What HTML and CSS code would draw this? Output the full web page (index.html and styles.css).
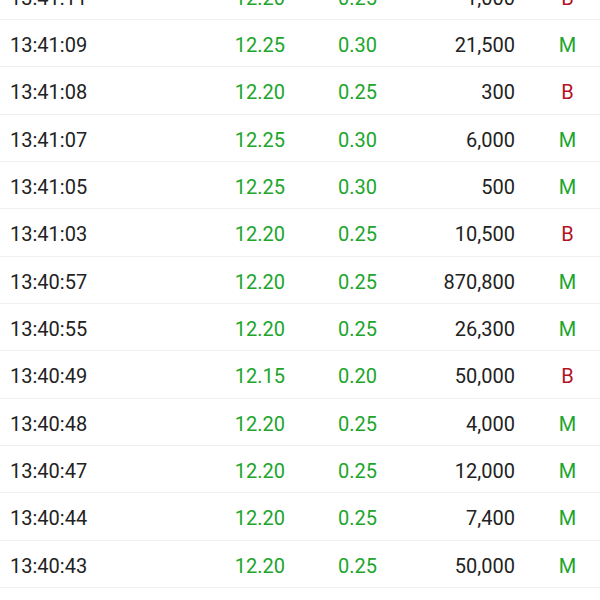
FILE: index.html
```html
<!DOCTYPE html>
<html lang="en">
<head>
<meta charset="utf-8">
<title>Trades</title>
<link rel="stylesheet" href="styles.css">
</head>
<body>
<div class="list">
  <div class="row"><span class="time">13:41:11</span><span class="price up">12.20</span><span class="chg up">0.25</span><span class="vol">1,000</span><span class="side sell">B</span></div>
  <div class="row"><span class="time">13:41:09</span><span class="price up">12.25</span><span class="chg up">0.30</span><span class="vol">21,500</span><span class="side buy">M</span></div>
  <div class="row"><span class="time">13:41:08</span><span class="price up">12.20</span><span class="chg up">0.25</span><span class="vol">300</span><span class="side sell">B</span></div>
  <div class="row"><span class="time">13:41:07</span><span class="price up">12.25</span><span class="chg up">0.30</span><span class="vol">6,000</span><span class="side buy">M</span></div>
  <div class="row"><span class="time">13:41:05</span><span class="price up">12.25</span><span class="chg up">0.30</span><span class="vol">500</span><span class="side buy">M</span></div>
  <div class="row"><span class="time">13:41:03</span><span class="price up">12.20</span><span class="chg up">0.25</span><span class="vol">10,500</span><span class="side sell">B</span></div>
  <div class="row"><span class="time">13:40:57</span><span class="price up">12.20</span><span class="chg up">0.25</span><span class="vol">870,800</span><span class="side buy">M</span></div>
  <div class="row"><span class="time">13:40:55</span><span class="price up">12.20</span><span class="chg up">0.25</span><span class="vol">26,300</span><span class="side buy">M</span></div>
  <div class="row"><span class="time">13:40:49</span><span class="price up">12.15</span><span class="chg up">0.20</span><span class="vol">50,000</span><span class="side sell">B</span></div>
  <div class="row"><span class="time">13:40:48</span><span class="price up">12.20</span><span class="chg up">0.25</span><span class="vol">4,000</span><span class="side buy">M</span></div>
  <div class="row"><span class="time">13:40:47</span><span class="price up">12.20</span><span class="chg up">0.25</span><span class="vol">12,000</span><span class="side buy">M</span></div>
  <div class="row"><span class="time">13:40:44</span><span class="price up">12.20</span><span class="chg up">0.25</span><span class="vol">7,400</span><span class="side buy">M</span></div>
  <div class="row"><span class="time">13:40:43</span><span class="price up">12.20</span><span class="chg up">0.25</span><span class="vol">50,000</span><span class="side buy">M</span></div>
</div>
</body>
</html>
```
FILE: styles.css
```css
html, body {
  margin: 0;
  padding: 0;
  background: #ffffff;
  overflow: hidden;
}
body {
  font-family: Roboto, "Liberation Sans", sans-serif;
  font-size: 20px;
  color: #222222;
}
.list {
  margin-top: -27.33px;
}
.row {
  box-sizing: border-box;
  height: 47.33px;
  border-bottom: 1px solid #efefef;
  display: grid;
  grid-template-columns: 175px 100px 92px 138px 1fr;
  align-items: center;
  padding-left: 10px;
  padding-top: 4px;
}
.time { text-align: left; }
.price, .chg, .vol { text-align: right; }
.side {
  text-align: center;
  margin-left: 20px;
}
.up, .buy { color: #20a52b; }
.sell { color: #b3121f; }
```
